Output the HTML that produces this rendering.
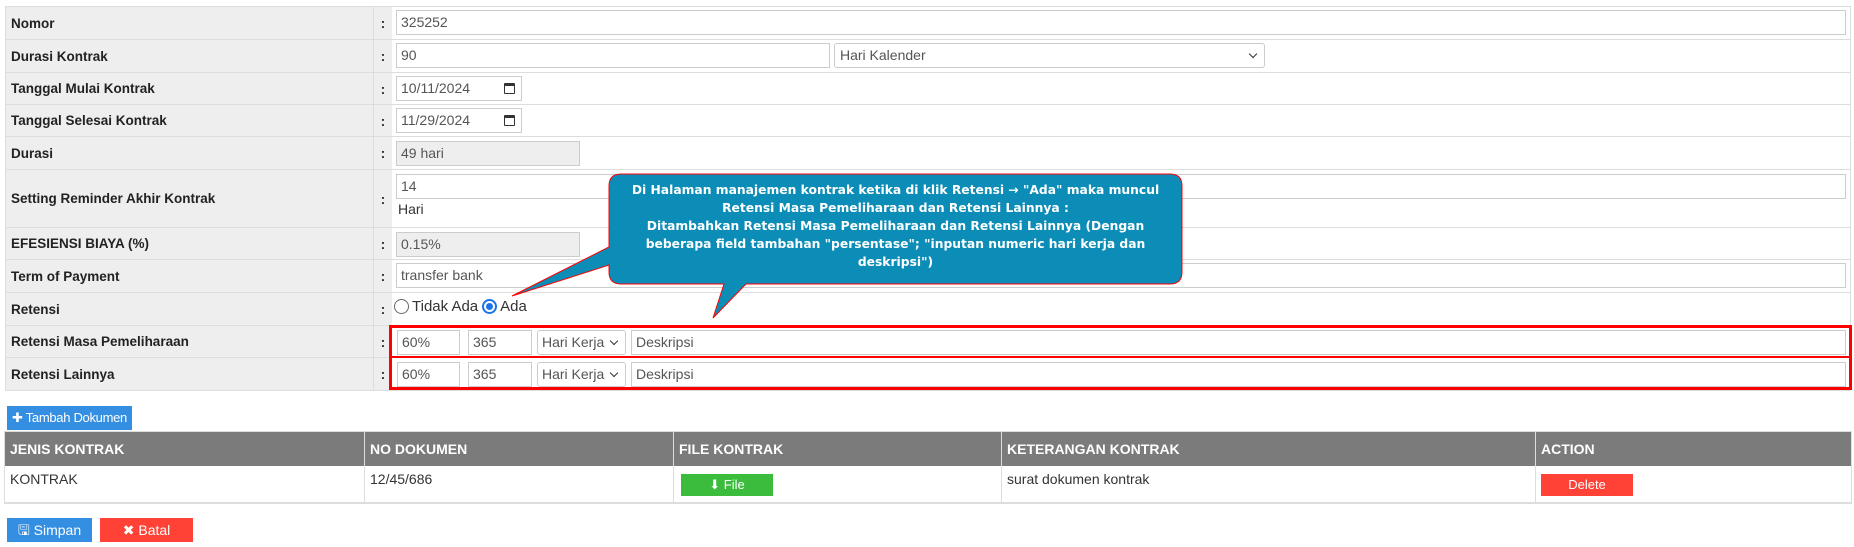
<!DOCTYPE html>
<html><head><meta charset="utf-8">
<style>
*{box-sizing:border-box;margin:0;padding:0}
body{width:1854px;height:547px;background:#fff;font-family:"Liberation Sans",Arial,sans-serif;font-size:14px;color:#333;position:relative;overflow:hidden}
.a{position:absolute}
.lab{position:absolute;left:5px;width:369px;background:#eee;border:1px solid #ddd;border-right:none;font-weight:bold;font-size:13.5px;padding-left:5px;display:flex;align-items:center;color:#222}
.col{position:absolute;left:373px;width:20px;background:#eee;border:1px solid #ddd;font-weight:bold;display:flex;align-items:center;justify-content:center}
.val{position:absolute;left:392px;width:1459px;background:#fff;border:1px solid #ddd;border-left:none}
.in{position:absolute;height:25px;border:1px solid #ccc;background:#fff;color:#555;padding-left:4px;line-height:23px;font-size:14px}
.ro{background:#eee}
.sel:after{content:"";position:absolute;right:8px;top:7px;width:5px;height:5px;border-right:1.5px solid #333;border-bottom:1.5px solid #333;transform:rotate(45deg)}
.cal{position:absolute;right:6px;top:6px;width:11px;height:11px;border:1.3px solid #333;border-top-width:3px;border-radius:1px}
.th{position:absolute;top:432px;height:34px;background:#7b7b7b;color:#fff;font-weight:bold;padding-left:5px;line-height:34px;border-right:1px solid #ddd}
.td{position:absolute;top:466px;height:37px;border:1px solid #ddd;border-top:none;border-left:none;padding:5px 0 0 5px}
.btn{position:absolute;color:#fff;text-align:center;font-size:14px}
</style></head><body>

<div class="lab" style="top:6px;height:34px">Nomor</div><div class="col" style="top:6px;height:34px">:</div><div class="val" style="top:6px;height:34px"></div>
<div class="lab" style="top:39px;height:34px">Durasi Kontrak</div><div class="col" style="top:39px;height:34px">:</div><div class="val" style="top:39px;height:34px"></div>
<div class="lab" style="top:72px;height:33px">Tanggal Mulai Kontrak</div><div class="col" style="top:72px;height:33px">:</div><div class="val" style="top:72px;height:33px"></div>
<div class="lab" style="top:104px;height:33px">Tanggal Selesai Kontrak</div><div class="col" style="top:104px;height:33px">:</div><div class="val" style="top:104px;height:33px"></div>
<div class="lab" style="top:136px;height:34px">Durasi</div><div class="col" style="top:136px;height:34px">:</div><div class="val" style="top:136px;height:34px"></div>
<div class="lab" style="top:169px;height:59px">Setting Reminder Akhir Kontrak</div><div class="col" style="top:169px;height:59px">:</div><div class="val" style="top:169px;height:59px"></div>
<div class="lab" style="top:227px;height:33px">EFESIENSI BIAYA (%)</div><div class="col" style="top:227px;height:33px">:</div><div class="val" style="top:227px;height:33px"></div>
<div class="lab" style="top:259px;height:34px">Term of Payment</div><div class="col" style="top:259px;height:34px">:</div><div class="val" style="top:259px;height:34px"></div>
<div class="lab" style="top:292px;height:34px">Retensi</div><div class="col" style="top:292px;height:34px">:</div><div class="val" style="top:292px;height:34px"></div>
<div class="lab" style="top:325px;height:33px">Retensi Masa Pemeliharaan</div><div class="col" style="top:325px;height:33px">:</div><div class="val" style="top:325px;height:33px"></div>
<div class="lab" style="top:357px;height:34px">Retensi Lainnya</div><div class="col" style="top:357px;height:34px">:</div><div class="val" style="top:357px;height:34px"></div>

<div class="in" style="left:396px;top:10px;width:1450px">325252</div>
<div class="in" style="left:396px;top:43px;width:434px">90</div>
<div class="in sel" style="left:834px;top:43px;width:431px;border-radius:3px;padding-left:5px">Hari Kalender</div>
<div class="in" style="left:396px;top:76px;width:126px">10/11/2024<span class="cal"></span></div>
<div class="in" style="left:396px;top:108px;width:126px">11/29/2024<span class="cal"></span></div>
<div class="in ro" style="left:396px;top:141px;width:184px">49 hari</div>
<div class="in" style="left:396px;top:174px;width:1450px">14</div>
<div class="a" style="left:398px;top:201px;color:#333">Hari</div>
<div class="in ro" style="left:396px;top:232px;width:184px">0.15%</div>
<div class="in" style="left:396px;top:263px;width:1450px">transfer bank</div>
<div class="a" style="left:394px;top:298px;font-size:15px;color:#333;display:flex;align-items:center">
<span style="display:inline-block;width:15px;height:15px;border:1px solid #666;border-radius:50%;margin-right:3px"></span>Tidak Ada
<span style="display:inline-block;width:15px;height:15px;border:2px solid #1a73e8;border-radius:50%;margin:0 3px 0 4px;position:relative;background:#fff"><span style="position:absolute;left:2px;top:2px;width:7px;height:7px;border-radius:50%;background:#1a73e8"></span></span>Ada</div>

<div class="a" style="left:389px;top:325px;width:1463px;height:65px;border:3px solid #f00"></div>
<div class="a" style="left:392px;top:356px;width:1457px;height:2px;background:#f00"></div>
<div class="in" style="left:397px;top:330px;width:63px">60%</div>
<div class="in" style="left:468px;top:330px;width:64px">365</div>
<div class="in sel" style="left:537px;top:330px;width:89px;border-radius:3px;padding-right:16px">Hari Kerja</div>
<div class="in" style="left:631px;top:330px;width:1215px">Deskripsi</div>
<div class="in" style="left:397px;top:362px;width:63px">60%</div>
<div class="in" style="left:468px;top:362px;width:64px">365</div>
<div class="in sel" style="left:537px;top:362px;width:89px;border-radius:3px;padding-right:16px">Hari Kerja</div>
<div class="in" style="left:631px;top:362px;width:1215px">Deskripsi</div>

<svg class="a" style="left:0;top:0" width="1854" height="547">
<path d="M621 174 H1170 Q1182 174 1182 186 V272 Q1182 284 1170 284 H746 L713 318 L724 284 H621 Q609 284 609 272 V265 L512 296 L609 247 V186 Q609 174 621 174 Z" fill="#0b8db7" stroke="#f00" stroke-width="1"/>
</svg>
<div class="a" style="left:600px;top:181px;width:591px;text-align:center;color:#fff;font-family:'DejaVu Sans',sans-serif;font-weight:bold;font-size:12.3px;line-height:18px">Di Halaman manajemen kontrak ketika di klik Retensi → "Ada" maka muncul<br>Retensi Masa Pemeliharaan dan Retensi Lainnya :<br>Ditambahkan Retensi Masa Pemeliharaan dan Retensi Lainnya (Dengan<br>beberapa field tambahan "persentase"; "inputan numeric hari kerja dan<br>deskripsi")</div>

<div class="btn" style="left:7px;top:406px;width:125px;height:24px;background:#348fe2;line-height:24px;font-size:13px;letter-spacing:-0.3px">✚ Tambah Dokumen</div>

<div class="a" style="left:4px;top:431px;width:1848px;height:73px;border:1px solid #ddd"></div>
<div class="th" style="left:5px;width:360px">JENIS KONTRAK</div>
<div class="th" style="left:365px;width:309px">NO DOKUMEN</div>
<div class="th" style="left:674px;width:328px">FILE KONTRAK</div>
<div class="th" style="left:1002px;width:534px">KETERANGAN KONTRAK</div>
<div class="th" style="left:1536px;width:315px;border-right:none">ACTION</div>
<div class="td" style="left:5px;width:360px">KONTRAK</div>
<div class="td" style="left:365px;width:309px">12/45/686</div>
<div class="td" style="left:674px;width:328px"></div>
<div class="td" style="left:1002px;width:534px">surat dokumen kontrak</div>
<div class="td" style="left:1536px;width:315px;border-right:none"></div>
<div class="btn" style="left:681px;top:474px;width:92px;height:22px;background:#3cbc3c;line-height:22px;font-size:13px">⬇ File</div>
<div class="btn" style="left:1541px;top:474px;width:92px;height:22px;background:#ff4136;line-height:22px;font-size:13px">Delete</div>

<div class="btn" style="left:7px;top:518px;width:85px;height:24px;background:#348fe2;line-height:24px">🖫 Simpan</div>
<div class="btn" style="left:100px;top:518px;width:93px;height:24px;background:#ff4136;line-height:24px">✖ Batal</div>
</body></html>
